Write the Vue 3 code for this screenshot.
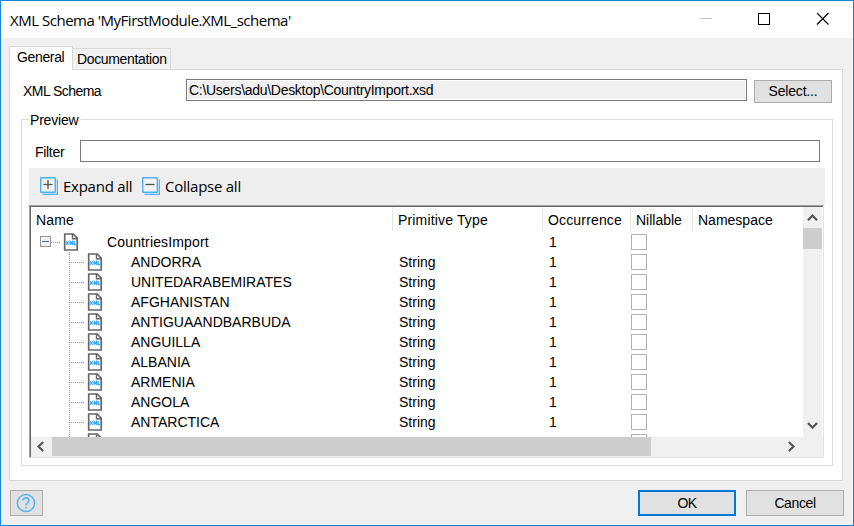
<script setup>
const names = ['ANDORRA', 'UNITEDARABEMIRATES', 'AFGHANISTAN', 'ANTIGUAANDBARBUDA', 'ANGUILLA', 'ALBANIA', 'ARMENIA', 'ANGOLA', 'ANTARCTICA', '']
const rows = [
  { name: 'CountriesImport', type: '', count: '1', root: true },
  ...names.map((name) => ({ name, type: name ? 'String' : '', count: name ? '1' : '', root: false })),
]
</script>

<template>
  <div class="window">
    <header class="titlebar">
      <h1>XML Schema 'MyFirstModule.XML_schema'</h1>
      <svg class="controls" width="154" height="37" viewBox="0 0 154 37" shape-rendering="crispEdges">
        <path d="M1 17.5H13" stroke="#c4c4c4" fill="none" />
        <rect x="59.5" y="12.5" width="11" height="11" fill="none" stroke="#000" />
        <path d="M118 12L129.500 23.500M129.500 12L118 23.500" stroke="#000" stroke-width="1.100" fill="none" shape-rendering="auto" />
      </svg>
    </header>

    <main class="content">
      <nav class="tabs">
        <span class="tab active">General</span>
        <span class="tab other">Documentation</span>
      </nav>
      <section class="panel">
        <div class="file-row">
          <label>XML Schema</label>
          <div class="path">C:\Users\adu\Desktop\CountryImport.xsd</div>
          <button class="select">Select...</button>
        </div>
        <div class="group">
          <span class="legend">Preview</span>
          <div class="filter-row">
            <label>Filter</label>
            <div class="filter"></div>
          </div>
          <div class="toolbar">
            <span v-for="kind in ['Expand', 'Collapse']" :key="kind" class="tool" :class="kind.toLowerCase()">
              <svg width="19" height="19" viewBox="0 0 19 19" fill="none">
                <path d="M2.500 17.300H17.300V2.500" stroke="#58b5f3" stroke-width="1.400" />
                <path d="M2.500 16.200H16.200V2.500" stroke="#bfe0f6" stroke-width="1" />
                <rect x="0.700" y="0.700" width="14.600" height="14.600" rx="0.500" fill="#f2f2f2" stroke="#4fb0f0" stroke-width="1.400" />
                <path d="M3.500 7.500H12.500" stroke="#555" stroke-width="1.300" />
                <path v-if="kind === 'Expand'" d="M8 3V12" stroke="#555" stroke-width="1.300" />
              </svg>
              <span>{{ kind }} all</span>
            </span>
          </div>
          <div class="tree">
            <div class="upper">
              <div class="grid">
                <div class="head">
                  <span class="wide">Name</span><span class="wide">Primitive Type</span><span class="wide">Occurrence</span><span>Nillable</span><span>Namespace</span>
                </div>
                <div v-for="(row, i) in rows" :key="i" class="row" :class="{ root: row.root }">
                  <div class="name-cell">
                    <svg v-if="row.root" class="branch" width="32" height="20" viewBox="0 0 32 20" shape-rendering="crispEdges">
                      <rect x="9.500" y="4.500" width="10" height="10" rx="1" fill="#f0f0f0" stroke="#969696" />
                      <path d="M11 9.500H18" stroke="#4b63a7" />
                      <path d="M20 10.500H30" stroke="#9b9b9b" stroke-dasharray="1 1" />
                    </svg>
                    <svg v-else class="branch" width="56" height="20" viewBox="0 0 56 20" shape-rendering="crispEdges">
                      <path d="M38.500 0V20M40 10.500H54" stroke="#9b9b9b" stroke-dasharray="1 1" />
                    </svg>
                    <svg class="file" width="16" height="20" viewBox="0 0 16 20" fill="none">
                      <path d="M1.700 2H10.200L14.200 6.200V18H1.700Z" fill="#fff" stroke="#666" stroke-width="1.700" />
                      <path d="M9.500 2V6.800H14" stroke="#666" stroke-width="1.400" />
                      <path d="M3.200 9.300L5.700 12.700M5.700 9.300L3.200 12.700M7.200 13.100V9.600L8.400 11.400L9.600 9.600V13.100M11.300 9V12.600H13.200" stroke="#2fa6f6" stroke-width="1.200" />
                    </svg>
                    <span class="name">{{ row.name }}</span>
                  </div>
                  <span class="type">{{ row.type }}</span>
                  <span class="count">{{ row.count }}</span>
                  <span class="check"></span>
                </div>
              </div>
              <div class="vbar">
                <svg width="19" height="21" viewBox="0 0 19 21"><path d="M5 13.200L9.500 8.500L14 13.200" fill="none" stroke="#555" stroke-width="2.200" /></svg>
                <div class="vthumb"></div>
                <svg class="last" width="19" height="21" viewBox="0 0 19 21"><path d="M5 7L9.500 11.700L14 7" fill="none" stroke="#555" stroke-width="2.200" /></svg>
              </div>
            </div>
            <div class="hbar">
              <svg width="21" height="20" viewBox="0 0 21 20"><path d="M12.200 5L7.500 9.500L12.200 14" fill="none" stroke="#555" stroke-width="2.200" /></svg>
              <div class="hthumb"></div>
              <svg class="right" width="21" height="20" viewBox="0 0 21 20"><path d="M7.800 5L12.500 9.500L7.800 14" fill="none" stroke="#555" stroke-width="2.200" /></svg>
            </div>
          </div>
        </div>
      </section>
      <footer class="footer">
        <button class="help" aria-label="Help">
          <svg width="20" height="20" viewBox="0 0 20 20" fill="none" stroke="#55b4f2" stroke-width="1.500">
            <circle cx="10" cy="10" r="8.600" />
            <path d="M7.200 7.600C7.200 3.800 12.900 3.900 12.900 7.500C12.900 9.700 10 9.900 10 12.500M10 13.800V15.500" stroke-width="1.600" />
          </svg>
        </button>
        <button class="ok">OK</button>
        <button class="cancel">Cancel</button>
      </footer>
    </main>
  </div>
</template>

<style>
body { margin: 0; overflow: hidden; }
</style>

<style scoped>
* { box-sizing: border-box; }
.window { width: 854px; height: 526px; border: 1px solid #1883d7; background: #f0f0f0; font: 14px/20px "Liberation Sans", Arial, sans-serif; color: #000; white-space: nowrap; }
svg { display: block; flex: none; }
.titlebar { height: 37px; background: #fff; display: flex; justify-content: space-between; padding-left: 9px; }
h1 { margin: 0; font: 400 15px/38px "Open Sans", "Noto Sans", sans-serif; letter-spacing: -0.48px; }
.content { padding: 8px 10px 0 8px; display: flex; flex-direction: column; }
.tabs { display: flex; align-items: flex-end; height: 23px; letter-spacing: -0.35px; }
.tab { border: 1px solid #d9d9d9; border-bottom: 0; }
.active { width: 64px; height: 24px; margin-bottom: -1px; background: #fff; padding-left: 7px; line-height: 21px; z-index: 1; }
.other { width: 98px; height: 21px; border-left: 0; background: #f2f2f2; padding-left: 4px; line-height: 20px; }
.panel { height: 412px; border: 1px solid #d9d9d9; background: #fff; padding: 9px 9px 0 11px; }
.file-row { display: flex; height: 23px; }
.file-row label { width: 165px; padding-left: 2px; line-height: 24px; letter-spacing: -0.55px; }
.path { width: 561px; height: 22px; border: 1px solid #7a7a7a; box-shadow: inset 0 0 0 1px #fff; background: #f0f0f0; padding-left: 2px; line-height: 21px; letter-spacing: -0.29px; }
button { font: inherit; color: inherit; border: 1px solid #adadad; background: #e1e1e1; padding: 0; border-radius: 0; }
.select { width: 78px; height: 23px; margin: 1px 0 0 7px; padding-bottom: 1px; letter-spacing: -0.2px; }
.group { width: 812px; height: 347px; margin-top: 17px; border: 1px solid #dcdcdc; padding: 0 8px 0 7px; }
.legend { display: block; width: 52px; height: 20px; margin: -10px 0 0; padding-left: 1px; background: #fff; line-height: 20px; letter-spacing: -0.2px; }
.filter-row { display: flex; margin-top: 10px; height: 22px; }
.filter-row label { width: 51px; padding-left: 6px; line-height: 24px; letter-spacing: -0.3px; }
.filter { width: 740px; height: 22px; border: 1px solid #7a7a7a; }
.toolbar { width: 796px; height: 37px; margin-top: 6px; background: #eee; display: flex; align-items: center; padding-left: 11px; font: 15px/37px "Open Sans", "Noto Sans", sans-serif; letter-spacing: -0.25px; }
.tool { display: flex; align-items: center; gap: 4px; }
.expand { width: 102px; }
.tree { width: 795px; height: 253px; border: 1px solid #a0a0a0; border-right-color: #e3e3e3; border-bottom-color: #e3e3e3; display: flex; flex-direction: column; }
.upper { display: flex; height: 231px; border-top: 1px solid #696969; border-left: 1px solid #696969; overflow: hidden; }
.grid { width: 772px; height: 230px; overflow: hidden; }
.head { display: grid; grid-template-columns: 362px 150px 88px 62px 110px; height: 25px; line-height: 27px; }
.head span { height: 24px; padding-left: 5px; border-right: 1px solid #e5e5e5; }
.head .wide { letter-spacing: 0.16px; }
.head span:last-child { border: 0; }
.row { display: grid; grid-template-columns: 368px 150px 82px 16px; height: 20px; }
.root .name { letter-spacing: 0.15px; }
.name-cell { display: flex; }
.file { margin-right: 28px; }
.check { width: 16px; height: 16px; margin-top: 2px; border: 1px solid #b0b0b0; }
.vbar { width: 19px; background: #f0f0f0; }
.vthumb { height: 21px; background: #cdcdcd; }
.last { margin-top: 167px; }
.hbar { display: flex; height: 20px; background: #f0f0f0; border-left: 1px solid #696969; }
.hthumb { width: 599px; height: 19px; background: #cdcdcd; }
.right { margin-left: 130px; }
.footer { display: flex; height: 45px; padding: 9px 0 0 1px; }
.help { width: 33px; height: 26px; padding-left: 5px; background: #e1e1e1; }
.ok { width: 98px; height: 26px; margin-left: 595px; border: 2px solid #0078d7; padding-bottom: 1px; letter-spacing: -0.5px; }
.cancel { width: 98px; height: 26px; margin-left: 10px; margin-right: -2px; padding-bottom: 1px; letter-spacing: -0.4px; }
</style>
